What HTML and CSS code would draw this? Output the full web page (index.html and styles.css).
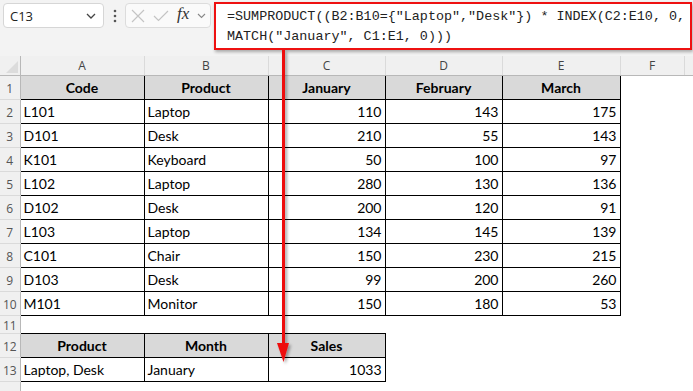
FILE: index.html
```html
<!DOCTYPE html>
<html lang="en">
<head>
  <meta charset="UTF-8">
  <title>SUMPRODUCT with INDEX MATCH</title>
  <link rel="stylesheet" href="styles.css">
</head>
<body>

  <div class="window">
    <!-- Formula bar -->
    <div class="topbar">
      <div class="namebox">
        <span>C13</span>
        <svg class="chev" width="10" height="6" viewBox="0 0 10 6"><path d="M1 1 L5 5 L9 1" fill="none" stroke="#444" stroke-width="1.3"/></svg>
      </div>
      <div class="dots">
        <svg width="4" height="14" viewBox="0 0 4 14"><circle cx="2" cy="2" r="1.3" fill="#555"/><circle cx="2" cy="7" r="1.3" fill="#555"/><circle cx="2" cy="12" r="1.3" fill="#555"/></svg>
      </div>
      <div class="fnbox">
        <svg width="14" height="14" viewBox="0 0 14 14"><path d="M1 1 L13 13 M13 1 L1 13" stroke="#c4c4c4" stroke-width="1.2"/></svg>
        <svg width="16" height="12" viewBox="0 0 16 12"><path d="M1 6 L5.5 10.5 L15 1" fill="none" stroke="#c4c4c4" stroke-width="1.2"/></svg>
        <span class="fx">fx</span>
        <svg width="9" height="6" viewBox="0 0 9 6"><path d="M1 1 L4.5 4.5 L8 1" fill="none" stroke="#888" stroke-width="1.1"/></svg>
      </div>
      <div class="formula">=SUMPRODUCT((B2:B10={"Laptop","Desk"}) * INDEX(C2:E10, 0,<br>MATCH("January", C1:E1, 0)))</div>
    </div>

    <!-- Worksheet -->
    <table class="sheet">
      <colgroup>
        <col style="width: 20px">
        <col style="width: 124px">
        <col style="width: 124px">
        <col style="width: 117px">
        <col style="width: 117px">
        <col style="width: 118px">
        <col style="width: 64px">
        <col style="width: 9px">
      </colgroup>
      <tr class="colhead">
        <th class="corner"><span class="tri"></span></th>
        <th>A</th><th>B</th><th>C</th><th>D</th><th>E</th><th>F</th><th></th>
      </tr>
      <tr>
        <td class="rh">1</td>
        <td class="hd">Code</td><td class="hd">Product</td><td class="hd">January</td><td class="hd">February</td><td class="hd">March</td><td></td><td></td>
      </tr>
      <tr>
        <td class="rh">2</td>
        <td class="c">L101</td><td class="c">Laptop</td><td class="c n">110</td><td class="c n">143</td><td class="c n">175</td><td></td><td></td>
      </tr>
      <tr>
        <td class="rh">3</td>
        <td class="c">D101</td><td class="c">Desk</td><td class="c n">210</td><td class="c n">55</td><td class="c n">143</td><td></td><td></td>
      </tr>
      <tr>
        <td class="rh">4</td>
        <td class="c">K101</td><td class="c">Keyboard</td><td class="c n">50</td><td class="c n">100</td><td class="c n">97</td><td></td><td></td>
      </tr>
      <tr>
        <td class="rh">5</td>
        <td class="c">L102</td><td class="c">Laptop</td><td class="c n">280</td><td class="c n">130</td><td class="c n">136</td><td></td><td></td>
      </tr>
      <tr>
        <td class="rh">6</td>
        <td class="c">D102</td><td class="c">Desk</td><td class="c n">200</td><td class="c n">120</td><td class="c n">91</td><td></td><td></td>
      </tr>
      <tr>
        <td class="rh">7</td>
        <td class="c">L103</td><td class="c">Laptop</td><td class="c n">134</td><td class="c n">145</td><td class="c n">139</td><td></td><td></td>
      </tr>
      <tr>
        <td class="rh">8</td>
        <td class="c">C101</td><td class="c">Chair</td><td class="c n">150</td><td class="c n">230</td><td class="c n">215</td><td></td><td></td>
      </tr>
      <tr>
        <td class="rh">9</td>
        <td class="c">D103</td><td class="c">Desk</td><td class="c n">99</td><td class="c n">200</td><td class="c n">260</td><td></td><td></td>
      </tr>
      <tr>
        <td class="rh">10</td>
        <td class="c">M101</td><td class="c">Monitor</td><td class="c n">150</td><td class="c n">180</td><td class="c n">53</td><td></td><td></td>
      </tr>
      <tr class="short">
        <td class="rh">11</td>
        <td></td><td></td><td></td><td></td><td></td><td></td><td></td>
      </tr>
      <tr>
        <td class="rh">12</td>
        <td class="hd">Product</td><td class="hd">Month</td><td class="hd">Sales</td><td></td><td></td><td></td><td></td>
      </tr>
      <tr>
        <td class="rh">13</td>
        <td class="c">Laptop, Desk</td><td class="c">January</td><td class="c n">1033</td><td></td><td></td><td></td><td></td>
      </tr>
      <tr>
        <td class="rh"></td>
        <td></td><td></td><td></td><td></td><td></td><td></td><td></td>
      </tr>
    </table>

    <!-- Arrow from formula to result cell -->
    <svg class="arrow" width="693" height="391" viewBox="0 0 693 391">
      <defs>
        <filter id="shade" x="-50%" y="-10%" width="200%" height="120%">
          <feDropShadow dx="2" dy="2" stdDeviation="1.5" flood-color="#000" flood-opacity="0.35"/>
        </filter>
      </defs>
      <g filter="url(#shade)">
        <rect x="282" y="50" width="3" height="295" fill="#ee1111"/>
        <path d="M277 343 L289 343 L283.5 362 Z" fill="#ee1111"/>
      </g>
    </svg>
  </div>

</body>
</html>
```

FILE: styles.css
```css
body {
  margin: 0;
  padding: 0;
  background-color: #ffffff;
  font-family: Lato, "Liberation Sans", sans-serif;
}

.window {
  position: relative;
  width: 693px;
  height: 391px;
  overflow: hidden;
  background-color: #ffffff;
}

.topbar {
  height: 56px;
  background-color: #f3f3f3;
  display: flex;
  align-items: flex-start;
  box-sizing: border-box;
  padding: 3px 0 0 3px;
}

.namebox {
  width: 101px;
  height: 25px;
  box-sizing: border-box;
  background-color: #ffffff;
  border: 1px solid #d6d6d6;
  border-radius: 4px;
  display: flex;
  align-items: center;
  justify-content: space-between;
  padding: 0 7px 0 6px;
  font-family: "Open Sans", "Liberation Sans", sans-serif;
  font-size: 13px;
  color: #222;
}

.dots {
  width: 21px;
  height: 25px;
  display: flex;
  align-items: center;
  justify-content: center;
}

.fnbox {
  width: 86px;
  height: 25px;
  box-sizing: border-box;
  background-color: #fafafa;
  border: 1px solid #dcdcdc;
  border-radius: 4px;
  display: flex;
  align-items: center;
  gap: 8px;
  padding: 0 3px 0 5px;
}

.fx {
  font-family: "Liberation Serif", serif;
  font-style: italic;
  font-size: 17px;
  color: #333;
  margin-top: -3px;
}

.formula {
  margin-left: 3px;
  margin-top: -1px;
  width: 478px;
  height: 48px;
  box-sizing: border-box;
  background-color: #ffffff;
  border: 2px solid #ee1111;
  padding: 3px 0 0 11px;
  font-family: "Liberation Mono", "DejaVu Sans Mono", monospace;
  font-size: 13.4px;
  line-height: 20px;
  color: #222;
  white-space: nowrap;
  box-shadow: 1px 2px 3px rgba(0, 0, 0, 0.3);
}

.sheet {
  table-layout: fixed;
  border-collapse: collapse;
  width: 693px;
  font-size: 14px;
  color: #000;
}

.sheet td,
.sheet th {
  height: 24px;
  padding: 0 3px;
  box-sizing: border-box;
  white-space: nowrap;
  overflow: hidden;
}

.colhead th {
  height: 19px;
  background-color: #f0f0f0;
  border-right: 1px solid #dadada;
  border-bottom: 1px solid #b8b8b8;
  font-family: "Open Sans", "Liberation Sans", sans-serif;
  font-weight: normal;
  font-size: 12px;
  color: #444;
  text-align: center;
}

.colhead .corner {
  position: relative;
  padding: 0;
  border-right: 1px solid #b8b8b8;
}

.tri {
  position: absolute;
  right: 2px;
  bottom: 2px;
  width: 0;
  height: 0;
  border-left: 12px solid transparent;
  border-bottom: 12px solid #dcdcdc;
}

.sheet .rh {
  background-color: #f0f0f0;
  border-right: 1px solid #b8b8b8;
  border-bottom: 1px solid #dadada;
  font-family: "Open Sans", "Liberation Sans", sans-serif;
  font-size: 12px;
  line-height: 14px;
  color: #555;
  text-align: center;
  padding: 3px 0 0 0;
}

.sheet .short td {
  height: 17px;
}

.hd {
  background-color: #d9d9d9;
  border: 1px solid #000;
  font-weight: bold;
  text-align: center;
}

.c {
  border: 1px solid #000;
}

.n {
  text-align: right;
}

.arrow {
  position: absolute;
  left: 0;
  top: 0;
  pointer-events: none;
}
```
